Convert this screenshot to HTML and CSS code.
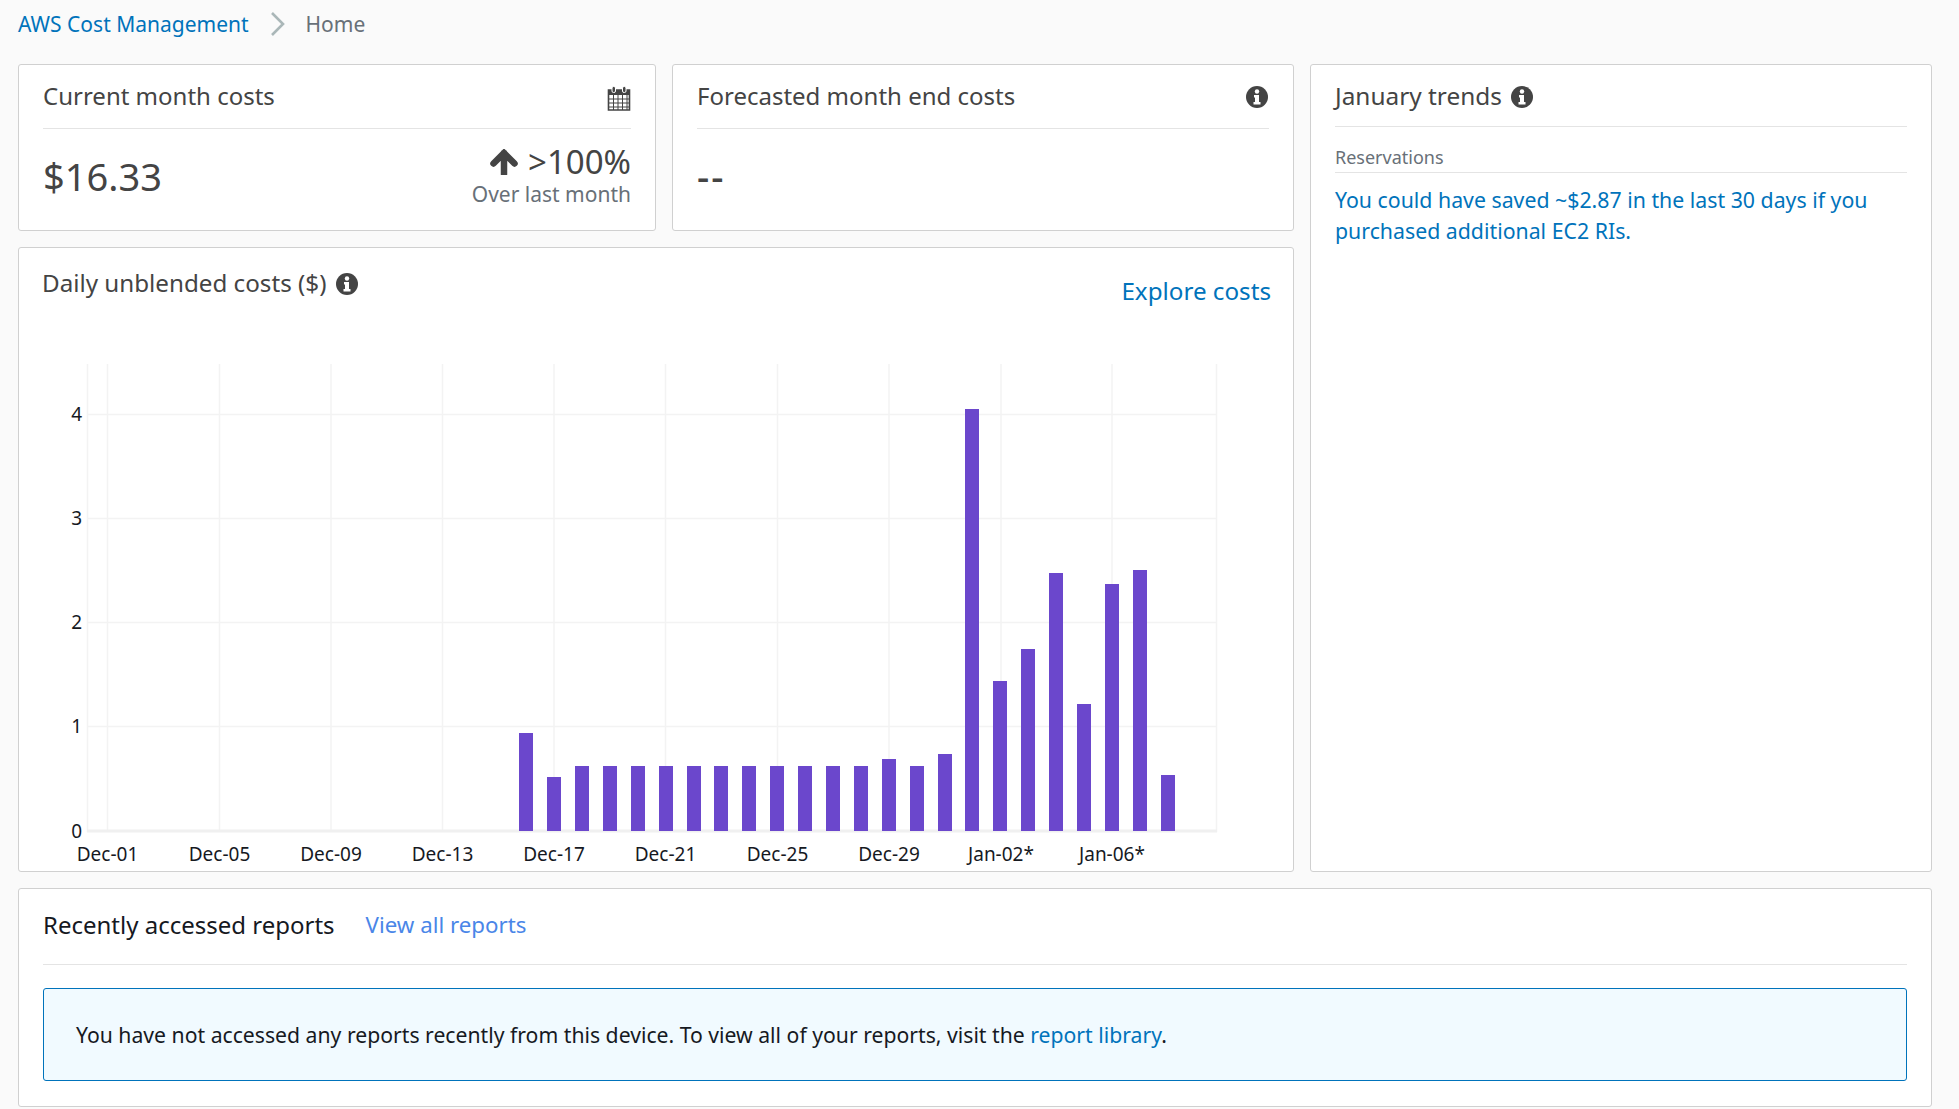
FILE: index.html
```html
<html>
  <head>
    <meta charset="utf-8" />
    <title>AWS Cost Management</title>
    <link rel="stylesheet" href="styles.css">
  </head>
  <body>
    <div class="crumbs">
      <a href="#">AWS Cost Management</a>
      <svg class="crumbArrow" viewBox="0 0 14 24" width="14" height="24"><path d="M1 1l11 11L1 23" fill="none" stroke="#aab7b8" stroke-width="2.6" /></svg>
      <span>Home</span>
    </div>

    <div class="layout">
      <div class="leftCol">
        <div class="topCards">
          <div class="card smallCard">
            <div class="cardHead">
              <h2>Current month costs</h2>
              <svg class="calendar" viewBox="0 0 24 25" width="24" height="25">
                <path d="M1.5 4h21v20h-21z" fill="none" stroke="#444" stroke-width="1.6" />
                <path d="M1 4h22v5H1z" fill="#444" />
                <path d="M2 13h20M2 17h20M2 21h20M6.5 9v15M11 9v15M15.5 9v15M20 9v15" stroke="#444" stroke-width="1" />
                <rect x="5" y="0.5" width="3.5" height="6" rx="1.5" fill="#444" stroke="#fff" stroke-width="1" />
                <rect x="15.5" y="0.5" width="3.5" height="6" rx="1.5" fill="#444" stroke="#fff" stroke-width="1" />
              </svg>
            </div>
            <div class="costRow">
              <div class="bigValue">$16.33</div>
              <div class="change">
                <div class="changeTop">
                  <svg viewBox="0 0 28 26" width="28" height="26"><path d="M14 25V4M3.5 14.5L14 4l10.5 10.5" fill="none" stroke="#444" stroke-width="6.5" stroke-linecap="round" /></svg>
                  <span>&gt;100%</span>
                </div>
                <div class="changeNote">Over last month</div>
              </div>
            </div>
          </div>
          <div class="card smallCard">
            <div class="cardHead">
              <h2>Forecasted month end costs</h2>
              <svg class="info" viewBox="0 0 22 22" width="22" height="22"><circle cx="11" cy="11" r="11" fill="#444" /><circle cx="11" cy="5.5" r="2.2" fill="#fff" /><path d="M8 9h5v7h1.5v2.5h-7V16H9v-4.500H8z" fill="#fff" /></svg>
            </div>
            <div class="bigValue emptyValue">--</div>
          </div>
        </div>

        <div class="card chartCard">
          <div class="chartHead">
            <h2>Daily unblended costs ($) <svg class="info" viewBox="0 0 22 22" width="22" height="22"><circle cx="11" cy="11" r="11" fill="#444" /><circle cx="11" cy="5.5" r="2.2" fill="#fff" /><path d="M8 9h5v7h1.5v2.5h-7V16H9v-4.500H8z" fill="#fff" /></svg></h2>
            <a class="explore" href="#">Explore costs</a>
          </div>
          <svg class="chart" width="1274" height="508" viewBox="19 364 1274 508">
            <g class="grid">
              <path d="M87.5 364V832M107.5 364V832M219.5 364V832M331 364V832M442.5 364V832M554 364V832M665.5 364V832M777.5 364V832M889 364V832M1001 364V832M1112 364V832M1216.5 364V832" />
              <path d="M87 414.5H1217M87 518.5H1217M87 622.5H1217M87 726.5H1217" />
              <path class="baseline" d="M87 831H1217" />
            </g>
            <g class="bars">
              <rect x="519" y="733" width="14" height="98" />
              <rect x="547" y="777" width="14" height="54" />
              <rect x="575" y="766" width="14" height="65" />
              <rect x="603" y="766" width="14" height="65" />
              <rect x="631" y="766" width="14" height="65" />
              <rect x="659" y="766" width="14" height="65" />
              <rect x="687" y="766" width="14" height="65" />
              <rect x="714" y="766" width="14" height="65" />
              <rect x="742" y="766" width="14" height="65" />
              <rect x="770" y="766" width="14" height="65" />
              <rect x="798" y="766" width="14" height="65" />
              <rect x="826" y="766" width="14" height="65" />
              <rect x="854" y="766" width="14" height="65" />
              <rect x="882" y="759" width="14" height="72" />
              <rect x="910" y="766" width="14" height="65" />
              <rect x="938" y="754" width="14" height="77" />
              <rect x="965" y="409" width="14" height="422" />
              <rect x="993" y="681" width="14" height="150" />
              <rect x="1021" y="649" width="14" height="182" />
              <rect x="1049" y="573" width="14" height="258" />
              <rect x="1077" y="704" width="14" height="127" />
              <rect x="1105" y="584" width="14" height="247" />
              <rect x="1133" y="570" width="14" height="261" />
              <rect x="1161" y="775" width="14" height="56" />
            </g>
            <g class="yLabels">
              <text x="82" y="421">4</text>
              <text x="82" y="525">3</text>
              <text x="82" y="629">2</text>
              <text x="82" y="733">1</text>
              <text x="82" y="838">0</text>
            </g>
            <g class="xLabels">
              <text x="107.5" y="861">Dec-01</text>
              <text x="219.5" y="861">Dec-05</text>
              <text x="331" y="861">Dec-09</text>
              <text x="442.5" y="861">Dec-13</text>
              <text x="554" y="861">Dec-17</text>
              <text x="665.5" y="861">Dec-21</text>
              <text x="777.5" y="861">Dec-25</text>
              <text x="889" y="861">Dec-29</text>
              <text x="1001" y="861">Jan-02*</text>
              <text x="1112" y="861">Jan-06*</text>
            </g>
          </svg>
        </div>
      </div>

      <div class="card trendsCard">
        <div class="trendsHead">
          <h2>January trends <svg class="info" viewBox="0 0 22 22" width="22" height="22"><circle cx="11" cy="11" r="11" fill="#444" /><circle cx="11" cy="5.5" r="2.2" fill="#fff" /><path d="M8 9h5v7h1.5v2.5h-7V16H9v-4.500H8z" fill="#fff" /></svg></h2>
        </div>
        <div class="trendLabel">Reservations</div>
        <a class="trendLink" href="#">You could have saved ~$2.87 in the last 30 days if you purchased additional EC2 RIs.</a>
      </div>
    </div>

    <div class="card reportsCard">
      <div class="reportsHead">
        <h2>Recently accessed reports</h2>
        <a class="viewAll" href="#">View all reports</a>
      </div>
      <div class="notice">
        You have not accessed any reports recently from this device. To view all of your reports, visit the <a href="#">report library</a>.
      </div>
    </div>
  </body>
</html>
```

FILE: styles.css
```css
* {
  box-sizing: border-box;
}

body {
  margin: 0;
  padding: 0 27px 0 18px;
  background-color: #fafafa;
  color: #444;
  font-family: "Noto Sans", sans-serif;
  font-size: 20px;
  overflow: hidden;
}

a {
  color: #0073bb;
  text-decoration: none;
}

h2 {
  margin: 0;
  font-size: 24px;
  font-weight: 400;
  line-height: 32px;
}

.crumbs {
  display: flex;
  align-items: center;
  height: 64px;
  padding-bottom: 16px;
  font-size: 21px;
  color: #687078;
}

.crumbArrow {
  margin: 0 21px 0 22px;
}

.card {
  background-color: #fff;
  border: 1px solid #d0d0d0;
  border-radius: 3px;
}

.layout {
  display: flex;
  gap: 16px;
}

.leftCol {
  width: 1276px;
  display: flex;
  flex-direction: column;
  gap: 16px;
}

.topCards {
  display: flex;
  gap: 16px;
}

.smallCard {
  height: 167px;
  padding: 14px 24px 0 24px;
}

.smallCard:first-child {
  width: 638px;
}

.smallCard:last-child {
  width: 622px;
}

.cardHead {
  display: flex;
  justify-content: space-between;
  align-items: flex-start;
  height: 50px;
  padding-top: 1px;
  border-bottom: 1px solid #e4e4e4;
}

.cardHead svg {
  margin-top: 6px;
}

.cardHead .info {
  margin-right: 1px;
}

.costRow {
  display: flex;
  justify-content: space-between;
  align-items: center;
  padding-top: 15px;
}

.bigValue {
  font-size: 38px;
}

.emptyValue {
  padding-top: 21px;
  font-weight: 500;
  letter-spacing: 2px;
}

.change {
  text-align: right;
}

.changeTop {
  display: flex;
  justify-content: flex-end;
  align-items: center;
  gap: 10px;
  font-size: 33px;
  line-height: 36px;
}

.changeNote {
  color: #687078;
  font-size: 21px;
  line-height: 28px;
}

.info {
  vertical-align: -3px;
  margin-left: 3px;
}

.chartCard {
  height: 625px;
}

.chartHead {
  display: flex;
  justify-content: space-between;
  height: 116px;
  padding: 19px 22px 0 23px;
}

.chartHead h2 {
  font-size: 24.2px;
}

.explore {
  font-size: 24.2px;
  padding-top: 7px;
}

.chart {
  display: block;
}

.grid path {
  fill: none;
  stroke: #f3f3f3;
  stroke-width: 1.5;
}

.grid .baseline {
  stroke: #f0f0f0;
  stroke-width: 3;
}

.bars rect {
  fill: #6b47cc;
}

.chart text {
  font-size: 19px;
  fill: #16191f;
}

.yLabels text {
  text-anchor: end;
}

.xLabels text {
  text-anchor: middle;
}

.trendsCard {
  width: 622px;
  padding: 15px 24px;
}

.trendsHead {
  height: 47px;
  border-bottom: 1px solid #e4e4e4;
}

.trendsHead h2 {
  font-size: 24.4px;
}

.trendLabel {
  margin-top: 18px;
  padding-bottom: 3px;
  border-bottom: 1px solid #e4e4e4;
  color: #687078;
  font-size: 18px;
}

.trendLink {
  display: block;
  margin-top: 11px;
  font-size: 21.3px;
  line-height: 31px;
}

.reportsCard {
  height: 219px;
  margin-top: 16px;
  padding: 0 24px;
}

.reportsHead {
  display: flex;
  align-items: center;
  gap: 31px;
  height: 76px;
  padding-bottom: 4px;
  border-bottom: 1px solid #e4e4e4;
  color: #16191f;
}

.viewAll {
  color: #4a86e8;
  font-size: 22.3px;
}

.notice {
  height: 93px;
  margin-top: 23px;
  padding: 0 32px;
  background-color: #f1faff;
  border: 1px solid #0073bb;
  border-radius: 3px;
  color: #16191f;
  font-size: 21.2px;
  line-height: 91px;
}
```
